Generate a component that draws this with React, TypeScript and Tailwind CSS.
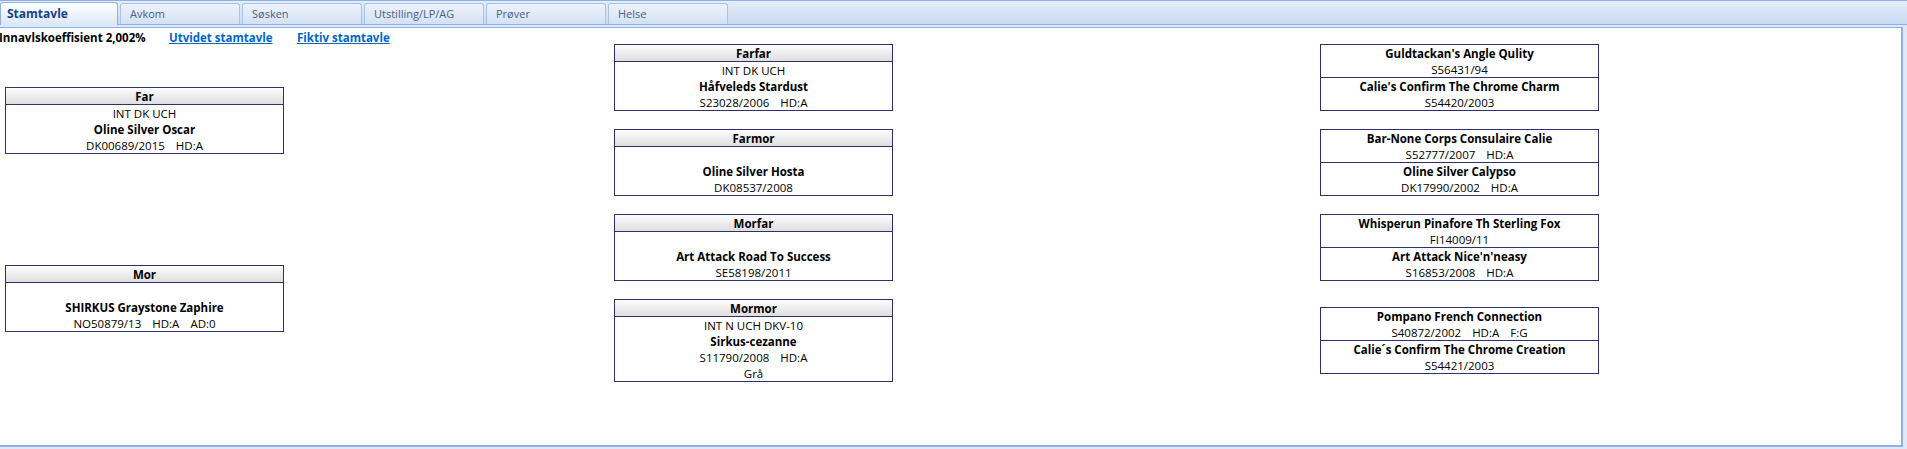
import React from "react";

type Parent = {
  label: string;
  titles?: string;
  name: string;
  info: string[][];
};

type Pair = { name: string; info: string[] }[];

const tabs = ["Stamtavle", "Avkom", "Søsken", "Utstilling/LP/AG", "Prøver", "Helse"];

const far: Parent = {
  label: "Far",
  titles: "INT DK UCH",
  name: "Oline Silver Oscar",
  info: [["DK00689/2015", "HD:A"]],
};

const mor: Parent = {
  label: "Mor",
  name: "SHIRKUS Graystone Zaphire",
  info: [["NO50879/13", "HD:A", "AD:0"]],
};

const grandparents: Parent[] = [
  { label: "Farfar", titles: "INT DK UCH", name: "Håfveleds Stardust", info: [["S23028/2006", "HD:A"]] },
  { label: "Farmor", name: "Oline Silver Hosta", info: [["DK08537/2008"]] },
  { label: "Morfar", name: "Art Attack Road To Success", info: [["SE58198/2011"]] },
  {
    label: "Mormor",
    titles: "INT N UCH DKV-10",
    name: "Sirkus-cezanne",
    info: [["S11790/2008", "HD:A"], ["Grå"]],
  },
];

const greatGrandparents: Pair[] = [
  [
    { name: "Guldtackan's Angle Qulity", info: ["S56431/94"] },
    { name: "Calie's Confirm The Chrome Charm", info: ["S54420/2003"] },
  ],
  [
    { name: "Bar-None Corps Consulaire Calie", info: ["S52777/2007", "HD:A"] },
    { name: "Oline Silver Calypso", info: ["DK17990/2002", "HD:A"] },
  ],
  [
    { name: "Whisperun Pinafore Th Sterling Fox", info: ["FI14009/11"] },
    { name: "Art Attack Nice'n'neasy", info: ["S16853/2008", "HD:A"] },
  ],
  [
    { name: "Pompano French Connection", info: ["S40872/2002", "HD:A", "F:G"] },
    { name: "Calie´s Confirm The Chrome Creation", info: ["S54421/2003"] },
  ],
];

const InfoLine = ({ items }: { items: string[] }) => (
  <div className="relative top-[1px] flex h-[16px] items-center justify-center gap-[11px] leading-[16px]">
    {items.map((it, i) => (
      <span key={i}>{it}</span>
    ))}
  </div>
);

const ParentBox = ({ dog, className = "" }: { dog: Parent; className?: string }) => (
  <div className={`w-[279px] border border-[#2f2f6b] bg-white text-center ${className}`}>
    <div className="h-[17px] border-b border-[#2f2f6b] bg-gradient-to-b from-[#fdfdfd] to-[#dedede] font-bold leading-[17px]">
      {dog.label}
    </div>
    <div className="relative top-[1px] h-[16px] leading-[16px]">{dog.titles ?? ""}</div>
    <div className="relative top-[1px] h-[16px] font-bold leading-[16px]">{dog.name}</div>
    {dog.info.map((line, i) => (
      <InfoLine key={i} items={line} />
    ))}
  </div>
);

const PairBox = ({ pair, className = "" }: { pair: Pair; className?: string }) => (
  <div className={`w-[279px] border border-[#2f2f6b] bg-white text-center ${className}`}>
    {pair.map((dog, i) => (
      <div key={i} className={i === 0 ? "border-b border-[#2f2f6b]" : ""}>
        <div className="relative top-[1px] h-[16px] font-bold leading-[16px]">{dog.name}</div>
        <InfoLine items={dog.info} />
      </div>
    ))}
  </div>
);

export default function App() {
  return (
    <div
      className="flex h-[449px] w-[1907px] flex-col overflow-hidden bg-[#dfe8f6] text-[11.5px] text-black"
      style={{ fontFamily: '"Open Sans", "Noto Sans", sans-serif' }}
    >
      {/* tab strip */}
      <div className="flex h-[25px] shrink-0 items-end border-t border-b border-[#8db2e3] bg-gradient-to-b from-[#e4edf9] to-[#c9daf0] pr-[5px]">
        {tabs.map((t, i) =>
          i === 0 ? (
            <div
              key={t}
              className="mb-[-1px] flex h-[23px] w-[118px] items-center rounded-t-[3px] border border-b-0 border-[#8db2e3] bg-gradient-to-b from-[#ffffff] to-[#dce8f8] pl-[6px] text-[12px] font-bold text-[#15428b]"
            >
              {t}
            </div>
          ) : (
            <div
              key={t}
              className="ml-[2px] flex h-[21px] w-[120px] items-center rounded-t-[3px] border border-b-0 border-[#a7c3ea] bg-gradient-to-b from-[#eef3fb] to-[#d3e1f4] pl-[9px] text-[11px] text-[#4b6186]"
            >
              {t}
            </div>
          ),
        )}
      </div>

      {/* panel */}
      <div className="mt-[2px] mr-[4px] flex h-[420px] flex-col border-t border-r-2 border-b-2 border-[#8db2e3] bg-white">
        <div className="flex h-[16px] items-center pt-[3px] font-bold">
          <span className="ml-[-1px] w-[170px]">Innavlskoeffisient 2,002%</span>
          <a className="w-[128px] text-[#0066cc] underline">Utvidet stamtavle</a>
          <a className="text-[#0066cc] underline">Fiktiv stamtavle</a>
        </div>

        <div className="flex">
          {/* parents */}
          <div className="ml-[5px] flex w-[279px] flex-col pt-[43px]">
            <ParentBox dog={far} />
            <ParentBox dog={mor} className="mt-[111px]" />
          </div>

          {/* grandparents */}
          <div className="ml-[330px] flex w-[279px] flex-col gap-[18px]">
            {grandparents.map((g) => (
              <ParentBox key={g.label} dog={g} />
            ))}
          </div>

          {/* great-grandparents */}
          <div className="ml-[427px] flex w-[279px] flex-col">
            {greatGrandparents.map((p, i) => (
              <PairBox
                key={i}
                pair={p}
                className={i === 0 ? "" : i === 3 ? "mt-[26px]" : "mt-[18px]"}
              />
            ))}
          </div>
        </div>
      </div>
    </div>
  );
}
